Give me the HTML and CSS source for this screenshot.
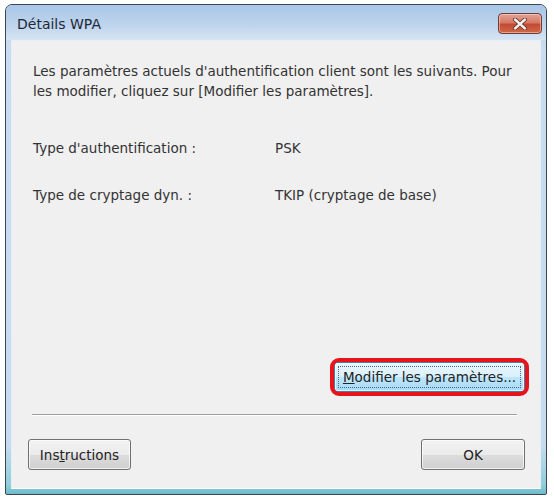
FILE: index.html
```html
<!DOCTYPE html>
<html lang="fr">
<head>
<meta charset="utf-8">
<title>Détails WPA</title>
<link rel="stylesheet" href="styles.css">
</head>
<body>
<div class="window">
  <div class="titlebar">
    <span class="title">Détails WPA</span>
    <button class="close" aria-label="Fermer">
      <svg width="16" height="12" viewBox="0 0 16 12"><path d="M3 1.5 L13 10.5 M13 1.5 L3 10.5" stroke="#5a2a22" stroke-width="4" stroke-linecap="round"/><path d="M3 1.5 L13 10.5 M13 1.5 L3 10.5" stroke="#f4f0ee" stroke-width="2.4" stroke-linecap="round"/></svg>
    </button>
  </div>
  <div class="frame">
    <div class="client">
      <p class="intro">Les paramètres actuels d'authentification client sont les suivants. Pour les modifier, cliquez sur [Modifier les paramètres].</p>
      <div class="row first"><span class="label">Type d'authentification :</span><span class="value">PSK</span></div>
      <div class="row second"><span class="label">Type de cryptage dyn. :</span><span class="value">TKIP (cryptage de base)</span></div>
      <div class="spacer"></div>
      <div class="action">
        <button class="btn default"><span class="focus"><u>M</u>odifier les paramètres...</span><span class="highlight"></span></button>
      </div>
      <hr class="sep">
      <div class="footer">
        <button class="btn instr">Ins<u>t</u>ructions</button>
        <button class="btn ok">OK</button>
      </div>
    </div>
  </div>
</div>
</body>
</html>
```
FILE: styles.css
```css
html, body {
  margin: 0;
  padding: 0;
  background: #ffffff;
}
body {
  font-family: "DejaVu Sans", Verdana, sans-serif;
  font-size: 13.5px;
  color: #333333;
}
.window {
  margin: 4px 0 0 5px;
  width: 542px;
  height: 491px;
  box-sizing: border-box;
  border: 1px solid #3d4650;
  border-radius: 7px 7px 2px 2px;
  background: linear-gradient(#b9d1ea, #c9dcf0 40px, #c6dbef 440px, #8fcfdc 480px, #6cbccb);
  display: flex;
  flex-direction: column;
}
.titlebar {
  height: 35px;
  display: flex;
  align-items: center;
  justify-content: space-between;
  padding: 0 4px 0 11px;
  background: linear-gradient(#a9c6e6, #bfd5ed 60%, #d6e4f3);
  border-radius: 6px 6px 0 0;
}
.title {
  font-size: 14px;
  color: #1e2836;
  margin-top: 2px;
}
.close {
  width: 44px;
  height: 21px;
  margin-top: 2px;
  padding: 0;
  border: 1px solid #6e3a34;
  border-radius: 4px;
  background: linear-gradient(#e3a394, #d77966 45%, #c24a32 55%, #d06a4a);
  display: flex;
  align-items: center;
  justify-content: center;
  box-shadow: inset 0 0 0 1px rgba(255,220,210,0.5);
}
.frame {
  flex: 1;
  display: flex;
  padding: 0 5px 5px 5px;
  min-width: 0;
}
.client {
  flex: 1;
  min-width: 0;
  background: #f0f0f0;
  border: 1px solid #e6eef7;
  border-bottom-color: #ffffff;
  display: flex;
  flex-direction: column;
  padding: 0 15px 18px 16px;
}
.intro {
  margin: 20px -9px 0 5px;
  line-height: 20px;
}
.row {
  display: flex;
  line-height: 20px;
  margin-left: 5px;
}
.row.first { margin-top: 37px; }
.row.second { margin-top: 27px; }
.label {
  width: 242px;
}
.spacer { flex: 1; }
.action {
  display: flex;
  justify-content: flex-end;
}
.btn {
  font-family: "DejaVu Sans", Verdana, sans-serif;
  font-size: 13.5px;
  color: #222222;
  height: 31px;
  border: 1px solid #707070;
  border-radius: 3px;
  background: linear-gradient(#f2f2f2, #ebebeb 50%, #dddddd 51%, #cfcfcf);
  box-shadow: inset 0 0 0 1px rgba(255,255,255,0.7);
  padding: 0;
}
.btn.default {
  position: relative;
  width: 191px;
  height: 30px;
  border-color: #3c7fb1;
  background: linear-gradient(#eaf6fd, #d9f0fc 50%, #bee6fd 51%, #a7d9f5);
  padding: 3px;
}
.focus {
  display: flex;
  align-items: center;
  justify-content: center;
  height: 100%;
  box-sizing: border-box;
  border: 1px dotted #4a6a80;
  white-space: nowrap;
}
.highlight {
  position: absolute;
  left: -5px;
  top: -5px;
  right: -5px;
  bottom: -5px;
  border: 4px solid #e8141c;
  border-radius: 9px;
  pointer-events: none;
}
.sep {
  margin: 22px 8px 0 4px;
  border: 0;
  border-top: 1px solid #a0a0a0;
  border-bottom: 1px solid #ffffff;
  height: 0;
}
.footer {
  display: flex;
  justify-content: space-between;
  margin-top: 23px;
}
.btn.instr { width: 103px; }
.btn.ok { width: 104px; }
```
